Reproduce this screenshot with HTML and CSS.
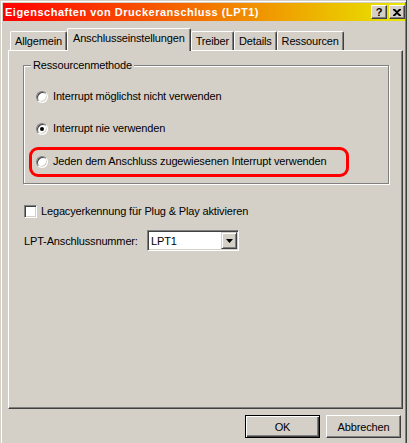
FILE: index.html
```html
<!DOCTYPE html>
<html>
  <head>
    <title>Eigenschaften von Druckeranschluss (LPT1)</title>
    <link rel="stylesheet" href="styles.css">
  </head>
  <body>
    <div class="window">
      <div class="titlebar">
        <span class="title">Eigenschaften von Druckeranschluss (LPT1)</span>
        <div class="caption-buttons">
          <span class="cap-btn cap-help">?</span>
          <span class="cap-btn cap-close">
            <svg width="8" height="7" viewBox="0 0 8 7">
              <path d="M0 0h2l2 2 2-2h2v1L5 3.5 8 6v1H6L4 5 2 7H0V6l3-2.5L0 1z" fill="#000"/>
            </svg>
          </span>
        </div>
      </div>

      <div class="tabs">
        <div class="tab">Allgemein</div>
        <div class="tab active">Anschlusseinstellungen</div>
        <div class="tab">Treiber</div>
        <div class="tab">Details</div>
        <div class="tab">Ressourcen</div>
      </div>

      <div class="panel">
        <fieldset class="group">
          <legend>Ressourcenmethode</legend>
          <label class="option first">
            <span class="radio"></span>Interrupt möglichst nicht verwenden
          </label>
          <label class="option">
            <span class="radio checked"></span>Interrupt nie verwenden
          </label>
          <label class="option marked">
            <span class="radio"></span>Jeden dem Anschluss zugewiesenen Interrupt verwenden
          </label>
        </fieldset>

        <label class="check-row">
          <span class="checkbox"></span>Legacyerkennung für Plug &amp; Play aktivieren
        </label>

        <div class="port-row">
          <span class="port-label">LPT-Anschlussnummer:</span>
          <div class="combo">
            <span class="combo-value">LPT1</span>
            <span class="combo-btn">
              <svg width="7" height="4" viewBox="0 0 7 4">
                <path d="M0 0h7L3.5 4z" fill="#000"/>
              </svg>
            </span>
          </div>
        </div>
      </div>

      <div class="actions">
        <button class="btn default">OK</button>
        <button class="btn">Abbrechen</button>
      </div>
    </div>
  </body>
</html>
```

FILE: styles.css
```css
body {
  margin: 0;
  background: #d4d0c8;
  font-family: "Liberation Sans", Arial, sans-serif;
  font-size: 11px;
  letter-spacing: -0.15px;
  color: #000;
}

.window {
  box-sizing: border-box;
  width: 407px;
  height: 443px;
  padding: 3px 1px 0 3px;
  display: flex;
  flex-direction: column;
  background: #d4d0c8;
  border-right: 1px solid #404040;
  box-shadow: inset 1px 1px #d4d0c8, inset 2px 2px #fff, inset -1px 0 #808080;
}

/* Titelleiste */
.titlebar {
  height: 18px;
  display: flex;
  align-items: center;
  justify-content: space-between;
  padding-left: 2px;
  background: linear-gradient(to right, #ff0000, #e8e800);
}

.title {
  color: #fff;
  font-weight: bold;
  font-size: 11px;
  letter-spacing: 0.5px;
  white-space: nowrap;
}

.caption-buttons {
  display: flex;
  gap: 2px;
}

.cap-btn {
  box-sizing: border-box;
  width: 16px;
  height: 14px;
  display: flex;
  align-items: center;
  justify-content: center;
  background: #d4d0c8;
  border: 1px solid;
  border-color: #fff #404040 #404040 #fff;
  box-shadow: inset -1px -1px #808080;
}

.cap-help {
  font-weight: bold;
  font-size: 11px;
  line-height: 12px;
}

/* Registerkarten */
.tabs {
  display: flex;
  align-items: flex-end;
  margin-top: 7px;
  padding-left: 7px;
  height: 22px;
}

.tab {
  box-sizing: border-box;
  height: 19px;
  padding: 3px 4px 0 4px;
  line-height: 13px;
  background: #d4d0c8;
  border-top: 1px solid #fff;
  border-left: 1px solid #fff;
  border-right: 1px solid #404040;
  border-radius: 2px 2px 0 0;
  box-shadow: inset -1px 0 #808080;
  white-space: nowrap;
}

.tab.active {
  position: relative;
  z-index: 1;
  height: 23px;
  margin-bottom: -1px;
  padding: 3px 5px 0 5px;
}

/* Inhalt */
.panel {
  flex: 1;
  margin-left: 5px;
  width: 395px;
  box-sizing: border-box;
  padding: 8px 13px 0 14px;
  border-top: 1px solid #fff;
  border-left: 1px solid #fff;
  border-right: 1px solid #404040;
  border-bottom: 1px solid #404040;
  box-shadow: inset -1px -1px #808080;
}

.group {
  margin: 0;
  padding: 0 0 6px 0;
  border: 1px solid #808080;
  box-shadow: inset 1px 1px #fff, 1px 1px #fff;
}

.group legend {
  margin-left: 7px;
  padding: 0 2px;
  line-height: 13px;
  background: #d4d0c8;
}

.option {
  display: flex;
  align-items: center;
  gap: 5px;
  line-height: 13px;
  margin: 19px 0 0 12px;
}

.option.first {
  margin-top: 18px;
}

.option.marked {
  box-sizing: border-box;
  width: 320px;
  margin: 12px 0 0 5px;
  padding: 5px 0 6px 4px;
  border: 3px solid #ff0000;
  border-radius: 9px;
}

.radio {
  box-sizing: border-box;
  width: 12px;
  height: 12px;
  flex: none;
  display: flex;
  align-items: center;
  justify-content: center;
  border-radius: 50%;
  background: #fff;
  border: 1px solid;
  border-color: #808080 #fff #fff #808080;
  box-shadow: inset 1px 1px #404040, inset -1px -1px #d4d0c8;
}

.radio.checked::after {
  content: "";
  width: 4px;
  height: 4px;
  border-radius: 50%;
  background: #000;
}

.check-row {
  display: flex;
  align-items: center;
  gap: 4px;
  line-height: 13px;
  margin: 21px 0 0 1px;
}

.checkbox {
  box-sizing: border-box;
  width: 13px;
  height: 13px;
  background: #fff;
  border: 1px solid;
  border-color: #808080 #fff #fff #808080;
  box-shadow: inset 1px 1px #404040, inset -1px -1px #d4d0c8;
}

.port-row {
  display: flex;
  align-items: center;
  margin: 12px 0 0 1px;
}

.port-label {
  width: 123px;
}

.combo {
  box-sizing: border-box;
  width: 92px;
  height: 21px;
  display: flex;
  align-items: center;
  justify-content: space-between;
  padding: 0 0 0 2px;
  background: #fff;
  border: 1px solid;
  border-color: #808080 #fff #fff #808080;
  box-shadow: inset 1px 1px #404040, inset -1px -1px #d4d0c8;
}

.combo-value {
  padding-left: 1px;
}

.combo-btn {
  box-sizing: border-box;
  width: 16px;
  height: 17px;
  margin-right: 1px;
  display: flex;
  align-items: center;
  justify-content: center;
  background: #d4d0c8;
  border: 1px solid;
  border-color: #d4d0c8 #404040 #404040 #d4d0c8;
  box-shadow: inset 1px 1px #fff, inset -1px -1px #808080;
}

/* Schaltflächen */
.actions {
  display: flex;
  justify-content: flex-end;
  gap: 6px;
  padding: 6px 4px 5px 0;
}

.btn {
  box-sizing: border-box;
  width: 75px;
  height: 23px;
  padding: 0;
  font-family: inherit;
  font-size: 11px;
  letter-spacing: inherit;
  color: #000;
  background: #d4d0c8;
  border: 1px solid;
  border-color: #fff #404040 #404040 #fff;
  box-shadow: inset -1px -1px #808080;
}

.btn.default {
  border: 1px solid #000;
  box-shadow: inset 1px 1px #fff, inset -1px -1px #404040, inset -2px -2px #808080;
}
```
